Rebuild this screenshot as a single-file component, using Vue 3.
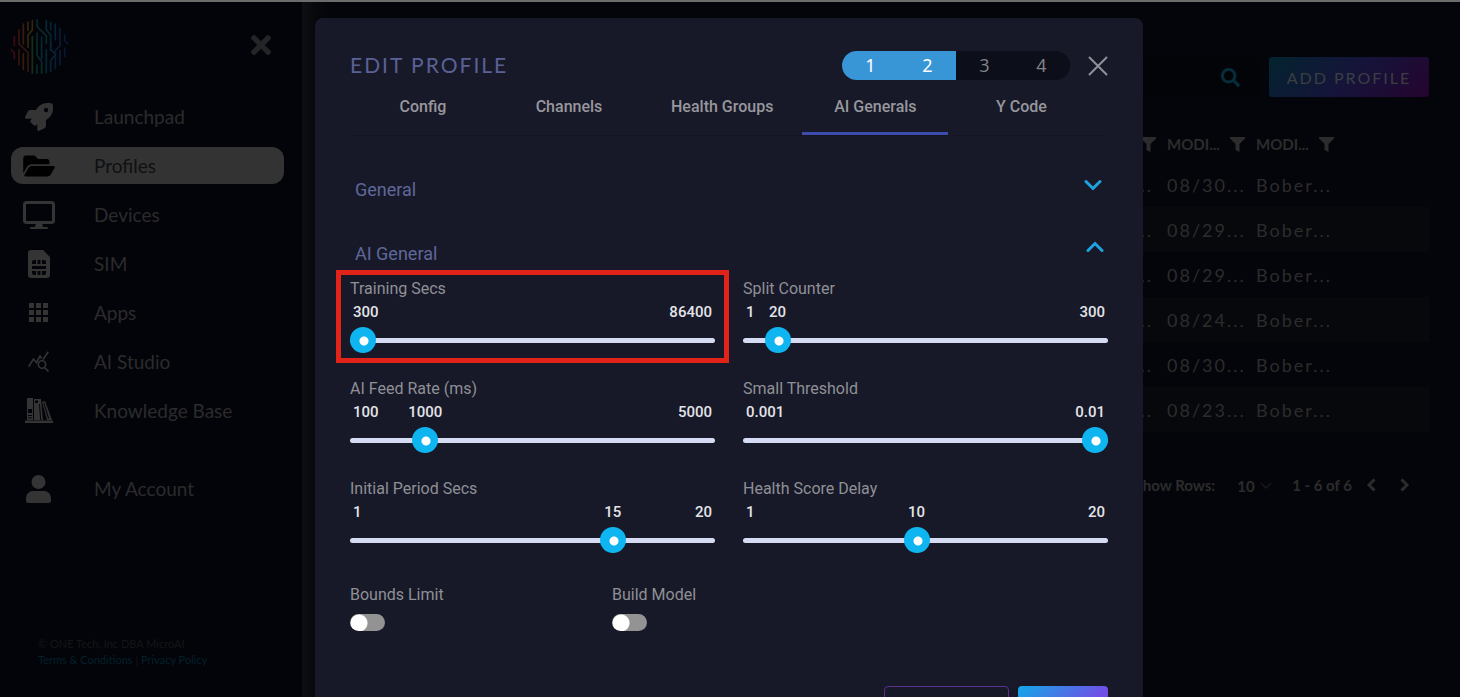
<script setup>
import { reactive } from 'vue'

const nav = [
  { label: 'Launchpad', icon: 'rocket' },
  { label: 'Profiles', icon: 'folder', active: true },
  { label: 'Devices', icon: 'monitor' },
  { label: 'SIM', icon: 'sim' },
  { label: 'Apps', icon: 'apps' },
  { label: 'AI Studio', icon: 'studio' },
  { label: 'Knowledge Base', icon: 'books' },
  { label: 'My Account', icon: 'user', apart: true },
]

const rows = ['08/30...', '08/29...', '08/29...', '08/24...', '08/30...', '08/23...']

const steps = [1, 2, 3, 4]
const currentStep = 2

const tabs = ['Config', 'Channels', 'Health Groups', 'AI Generals', 'Y Code']
const activeTab = 'AI Generals'

const sliders = reactive([
  { id: 'training', label: 'Training Secs', min: 300, max: 86400, step: 1, value: 300, marked: true },
  { id: 'split', label: 'Split Counter', min: 1, max: 300, step: 1, value: 20 },
  { id: 'feed', label: 'AI Feed Rate (ms)', min: 100, max: 5000, step: 100, value: 1000 },
  { id: 'threshold', label: 'Small Threshold', min: 0.001, max: 0.01, step: 0.001, value: 0.01 },
  { id: 'period', label: 'Initial Period Secs', min: 1, max: 20, step: 1, value: 15 },
  { id: 'delay', label: 'Health Score Delay', min: 1, max: 20, step: 1, value: 10 },
])

const toggles = reactive([
  { id: 'bounds', label: 'Bounds Limit', on: false },
  { id: 'build', label: 'Build Model', on: false },
])

const between = (s) => s.value > s.min && s.value < s.max
const place = (s) => {
  const ratio = (s.value - s.min) / (s.max - s.min)
  return { left: `calc(13px + (100% - 26px) * ${ratio})` }
}

const logoLines = [
  ['#4a0f14', 'M43 110V137M34 149L43 160V177'],
  ['#45180f', 'M57 90V132L84 158V215M57 150V195'],
  ['#45240f', 'M70 73V132M70 162V208'],
  ['#40300f', 'M84 67V92M97 62V90L84 106V142'],
  ['#1c3a18', 'M97 110V220'],
  ['#0b3534', 'M111 60V80L139 108V132M111 100V166L125 186V220M111 196V220'],
  ['#07323f', 'M125 112V176M139 62V90L152 106V150M139 150V218'],
  ['#072c45', 'M152 68V90M152 128V150L166 162V165L152 182V215M166 73V120'],
  ['#082442', 'M180 86V138L166 152V206M180 152V195'],
  ['#081c3a', 'M194 106V122L203 132M194 145V170'],
]
</script>

<template>
  <div class="page">
    <aside class="sidebar">
      <div class="brand">
        <svg class="logo" viewBox="30 55 177 170" role="img" aria-label="MicroAI">
          <path v-for="[color, d] in logoLines" :key="color" :d="d" :stroke="color" fill="none" stroke-width="5" stroke-linecap="round" />
        </svg>
        <button class="collapse" type="button" aria-label="Close menu">
          <svg viewBox="0 80 352 352"><path fill="currentColor" d="M242.72 256l100.07-100.07c12.28-12.28 12.28-32.19 0-44.48l-22.24-22.24c-12.28-12.28-32.19-12.28-44.48 0L176 189.28 75.93 89.21c-12.28-12.28-32.19-12.28-44.48 0L9.21 111.45c-12.28 12.28-12.28 32.19 0 44.48L109.28 256 9.21 356.07c-12.28 12.28-12.28 32.19 0 44.48l22.24 22.24c12.28 12.28 32.2 12.28 44.48 0L176 322.72l100.07 100.07c12.28 12.28 32.2 12.28 44.48 0l22.24-22.24c12.28-12.28 12.28-32.19 0-44.48L242.72 256z" /></svg>
        </button>
      </div>

      <nav class="nav">
        <a v-for="item in nav" :key="item.label" href="#" class="nav-item" :class="{ active: item.active, apart: item.apart }">
          <span class="nav-icon">
            <svg v-if="item.icon === 'rocket'" width="28" height="28" viewBox="0 0 512 512"><path fill="currentColor" d="M505.12 19.09c-1.19-5.53-6.66-11-12.21-12.18C460.72 0 435.51 0 410.41 0 307.18 0 245.27 55.2 199.05 128H94.84c-16.35.02-35.56 11.88-42.89 26.48L2.52 253.3A28.4 28.4 0 0 0 0 264a24 24 0 0 0 24 24h103.82l-22.48 22.47c-11.36 11.36-12.99 32.26 0 45.25l50.91 50.9c11.15 11.19 32.15 13.16 45.27 0L224 384.16V488a24 24 0 0 0 24 24 28.56 28.56 0 0 0 10.71-2.52l98.73-49.39c14.63-7.3 26.51-26.5 26.51-42.86V312.8c72.6-46.31 128.03-108.41 128.03-211.1.1-25.2.1-50.4-6.86-82.61zM384.04 168A40 40 0 1 1 424.05 128a40.02 40.02 0 0 1-40.01 40z" /></svg>
            <svg v-else-if="item.icon === 'folder'" width="32" height="28" viewBox="0 0 576 512"><path fill="currentColor" d="M572.694 292.093L500.27 416.248A63.997 63.997 0 0 1 444.989 448H45.025c-18.523 0-30.064-20.093-20.731-36.093l72.424-124.155A64 64 0 0 1 152 256h399.964c18.523 0 30.064 20.093 20.73 36.093zM152 224h328v-48c0-26.51-21.49-48-48-48H272l-64-64H48C21.49 64 0 85.49 0 112v278.046l69.077-118.418C86.214 242.25 117.989 224 152 224z" /></svg>
            <svg v-else-if="item.icon === 'monitor'" width="32" height="28" viewBox="0 0 32 28"><rect x="1.5" y="1.5" width="29" height="20" rx="2" fill="none" stroke="currentColor" stroke-width="3" /><path fill="currentColor" d="M13 22h6l1 4h4a1 1 0 0 1 0 2H8a1 1 0 0 1 0-2h4z" /></svg>
            <svg v-else-if="item.icon === 'sim'" width="22" height="28" viewBox="0 0 22 28"><path fill="currentColor" fill-rule="evenodd" d="M3 0h12l7 7v18a3 3 0 0 1-3 3H3a3 3 0 0 1-3-3V3a3 3 0 0 1 3-3zM6 10a2 2 0 0 0-2 2v2h4v-4zM9.500 10v4h3v-4zM14 10v4h4v-2a2 2 0 0 0-2-2zM4 16v3h14v-3zM4 21v2a2 2 0 0 0 2 2h2v-4zM9.500 21v4h3v-4zM14 21v4h2a2 2 0 0 0 2-2v-2z" /></svg>
            <svg v-else-if="item.icon === 'apps'" width="19" height="19" viewBox="0 0 19 19"><path fill="currentColor" d="M0 0h5v5H0zM7 0h5v5H7zM14 0h5v5h-5zM0 7h5v5H0zM7 7h5v5H7zM14 7h5v5h-5zM0 14h5v5H0zM7 14h5v5H7zM14 14h5v5h-5z" /></svg>
            <svg v-else-if="item.icon === 'studio'" width="21" height="21" viewBox="0 0 21 21" fill="none" stroke="currentColor" stroke-width="1.6"><path d="M.7 15.500L5.500 8l3 3.500L12 5l1.500 2.500M15 8.500L20.300.7M16.500 16.500l4 4" /><circle cx="14" cy="13.500" r="3.700" /></svg>
            <svg v-else-if="item.icon === 'books'" width="28" height="25" viewBox="0 0 28 25"><path fill="currentColor" fill-rule="evenodd" d="M2 0h6v22H2zM3 11v4h4v-4zM3 17v1h4v-1zM3 19.500v1h4v-1zM9 1h7l2 21H9zM10 2.500v2.500h3V2.500zM14 6l1.200 16h1L15 6zM17 4l3-1 7 19h-5zM18.300 5L23 20.500h1.200L19.200 4.500zM0 22.500h28V25H0z" /></svg>
            <svg v-else width="25" height="28" viewBox="0 0 25 28"><circle cx="12.500" cy="7" r="7" fill="currentColor" /><path fill="currentColor" d="M7 16h11a7 7 0 0 1 7 7v2.500a2.500 2.500 0 0 1-2.500 2.500h-20A2.500 2.500 0 0 1 0 25.500V23a7 7 0 0 1 7-7z" /></svg>
          </span>
          <span>{{ item.label }}</span>
        </a>
      </nav>

      <footer class="legal">
        <div>© ONE Tech, Inc DBA MicroAI</div>
        <div><a href="#">Terms &amp; Conditions</a> | <a href="#">Privacy Policy</a></div>
      </footer>
    </aside>

    <main class="content">
      <div class="toolbar">
        <div class="search">
          <input type="search" aria-label="Search profiles" />
          <svg width="19" height="19" viewBox="0 0 512 512"><path fill="currentColor" d="M505 442.7L405.3 343c-4.500-4.500-10.600-7-17-7H372c27.600-35.300 44-79.700 44-128C416 93.100 322.900 0 208 0S0 93.100 0 208s93.100 208 208 208c48.300 0 92.700-16.400 128-44v16.300c0 6.400 2.500 12.500 7 17l99.700 99.700c9.400 9.400 24.600 9.400 33.900 0l28.300-28.300c9.400-9.400 9.400-24.600.1-34zM208 336c-70.700 0-128-57.200-128-128 0-70.700 57.200-128 128-128 70.700 0 128 57.200 128 128 0 70.700-57.200 128-128 128z" /></svg>
        </div>
        <button class="add" type="button">ADD PROFILE</button>
      </div>

      <table class="profiles">
        <colgroup><col /><col class="col-date" /><col class="col-user" /></colgroup>
        <thead>
          <tr>
            <th v-for="(name, i) in ['', 'MODI...', 'MODI...']" :key="i" scope="col">
              <span class="th">
                <span class="th-name">{{ name }}</span>
                <svg width="15" height="15" viewBox="0 0 15 15"><path fill="currentColor" d="M0 0h15v1.500L9.500 7v8l-4-2V7L0 1.500z" /></svg>
              </span>
            </th>
          </tr>
        </thead>
        <tbody>
          <tr v-for="(date, i) in rows" :key="i">
            <td class="cut">...</td>
            <td>{{ date }}</td>
            <td>Bober...</td>
          </tr>
        </tbody>
      </table>

      <div class="pager">
        <label for="page-size">Show Rows:</label>
        <span class="size">
          <select id="page-size"><option>10</option></select>
          <svg width="12" height="8" viewBox="0 0 12 8" fill="none" stroke="currentColor" stroke-width="1.500"><path d="M1 1l5 5 5-5" /></svg>
        </span>
        <span class="range">1 - 6 of 6</span>
        <button type="button" aria-label="Previous page"><svg width="10" height="14" viewBox="0 0 10 14" fill="none" stroke="currentColor" stroke-width="3"><path d="M8.500 1.500L3 7l5.500 5.500" /></svg></button>
        <button type="button" aria-label="Next page"><svg width="10" height="14" viewBox="0 0 10 14" fill="none" stroke="currentColor" stroke-width="3"><path d="M1.500 1.500L7 7l-5.500 5.500" /></svg></button>
      </div>
    </main>

    <div class="overlay">
      <section class="modal" role="dialog" aria-labelledby="modal-title">
        <header class="modal-head">
          <h1 id="modal-title">EDIT PROFILE</h1>
          <ol class="steps">
            <li v-for="n in steps" :key="n" :class="{ done: n <= currentStep }">{{ n }}</li>
          </ol>
          <button class="close" type="button" aria-label="Close">
            <svg width="20" height="20" viewBox="0 0 20 20" fill="none" stroke="currentColor" stroke-width="2"><path d="M1 1l18 18M19 1L1 19" /></svg>
          </button>
        </header>

        <div class="tabs" role="tablist">
          <button v-for="tab in tabs" :key="tab" type="button" role="tab" :aria-selected="tab === activeTab" class="tab" :class="{ selected: tab === activeTab }">{{ tab }}</button>
        </div>

        <div class="panels">
          <button v-for="panel in ['General', 'AI General']" :key="panel" class="panel-head" type="button" :aria-expanded="panel === 'AI General'">
            <span>{{ panel }}</span>
            <svg width="20" height="14" viewBox="0 0 20 14" fill="none" stroke="currentColor" stroke-width="3" stroke-linecap="round"><path d="M2 4.500l7 7 7-7" /></svg>
          </button>
        </div>

        <div class="sliders">
          <div v-for="s in sliders" :key="s.id" class="field" :class="{ marked: s.marked }">
            <label :for="s.id">{{ s.label }}</label>
            <div class="values">
              <span>{{ s.min }}</span>
              <output v-if="between(s)" :for="s.id" :style="place(s)">{{ s.value }}</output>
              <span>{{ s.max }}</span>
            </div>
            <input :id="s.id" v-model.number="s.value" type="range" :min="s.min" :max="s.max" :step="s.step" />
          </div>
        </div>

        <div class="toggles">
          <div v-for="t in toggles" :key="t.id" class="toggle">
            <label :for="t.id">{{ t.label }}</label>
            <input :id="t.id" v-model="t.on" type="checkbox" role="switch" />
          </div>
        </div>

        <footer class="actions">
          <button class="secondary" type="button" aria-label="Cancel"></button>
          <button class="primary" type="button" aria-label="Save"></button>
        </footer>
      </section>
    </div>
  </div>
</template>

<style>
body {
  margin: 0;
  background: #04050a;
}
</style>

<style scoped>
* {
  box-sizing: border-box;
}

button {
  margin: 0;
  padding: 0;
  border: 0;
  background: none;
  color: inherit;
  font: inherit;
}

svg {
  display: block;
}

.page {
  position: relative;
  display: grid;
  grid-template-columns: 302px 1fr;
  height: 100vh;
  overflow: hidden;
  border-top: 2px solid #6a6d6b;
  background: #04050a;
  font-family: Lato, "Liberation Sans", sans-serif;
}

/* Sidebar */
.sidebar {
  display: flex;
  flex-direction: column;
  background: #030409;
  color: #323232;
}

.brand {
  display: flex;
  justify-content: space-between;
  align-items: flex-start;
  padding: 16px 31px 0 10px;
}

.logo {
  width: 59px;
  height: 57px;
  opacity: 0.8;
}

.collapse {
  margin-top: 17px;
  color: #242527;
}

.collapse svg {
  width: 20px;
  height: 20px;
}

.nav {
  display: flex;
  flex-direction: column;
  gap: 12px;
  padding: 23px 18px 0 11px;
}

.nav-item {
  display: flex;
  align-items: center;
  height: 37px;
  border-radius: 12px;
  color: #2b2b2c;
  font-size: 19px;
  text-decoration: none;
}

.nav-item.active {
  background: #333;
  color: #101011;
}

.nav-item.apart {
  margin-top: 29px;
}

.nav-icon {
  display: flex;
  justify-content: center;
  width: 55px;
  margin-right: 28px;
  color: #343434;
}

.active .nav-icon {
  color: #000;
}

.legal {
  margin-top: auto;
  padding: 0 0 29px 38px;
  color: #141518;
  font-size: 11px;
  line-height: 16px;
}

.legal a {
  color: #04202c;
  text-decoration: none;
}

/* Page behind the dialog */
.content {
  padding: 55px 31px 0 28px;
  background: linear-gradient(90deg, #0e0f12, #07080c 13px, #04050a 28px);
  color: #2c2c2c;
}

.toolbar {
  display: flex;
  gap: 11px;
}

.search {
  display: flex;
  flex: 1;
  align-items: center;
  padding-right: 18px;
  background: #030408;
  color: #062d3b;
}

.search input {
  flex: 1;
  min-width: 0;
  height: 40px;
  border: 0;
  outline: 0;
  background: none;
  color: inherit;
  appearance: none;
}

.add {
  width: 160px;
  height: 40px;
  border-radius: 3px;
  background: linear-gradient(135deg, #03232e, #15143a 50%, #25042f);
  color: #3b3f42;
  font-size: 16px;
  letter-spacing: 2px;
}

.profiles {
  width: 100%;
  margin-top: 29px;
  border-collapse: collapse;
  table-layout: fixed;
}

.col-date {
  width: 89px;
}

.col-user {
  width: 173px;
}

.profiles th,
.profiles td {
  height: 45px;
  padding: 0;
  text-align: left;
}

.profiles th {
  height: 36px;
  font-size: 15px;
}

.th {
  display: flex;
  align-items: center;
  gap: 8px;
}

.th-name {
  width: 55px;
}

.profiles th:first-child .th {
  justify-content: flex-end;
  padding-right: 11px;
}

.profiles td {
  font-size: 18px;
  letter-spacing: 2px;
}

.profiles td.cut {
  padding-right: 14px;
  text-align: right;
}

.profiles tbody tr:nth-child(even) {
  background: #07080c;
}

.pager {
  display: flex;
  align-items: center;
  justify-content: flex-end;
  margin-top: 43px;
  padding-right: 19px;
  font-size: 15px;
  font-weight: 700;
}

.size {
  display: flex;
  align-items: center;
  gap: 5px;
  margin: 2px 20px 0 22px;
}

.size select {
  width: 18px;
  padding: 0;
  border: 0;
  appearance: none;
  background: none;
  color: inherit;
  font: inherit;
}

.size svg {
  color: #17181b;
}

.range {
  margin-right: 14px;
}

.pager button + button {
  margin-left: 24px;
}

/* Dialog */
.overlay {
  position: absolute;
  inset: 0;
  display: flex;
  justify-content: center;
  align-items: flex-start;
  padding: 16px 2px 0 0;
}

.modal {
  width: min(828px, 100%);
  padding: 33px 35px 24px;
  border-radius: 8px;
  background: #171929;
  color: #8f9095;
  font-family: Roboto, "Liberation Sans", sans-serif;
  font-size: 16px;
}

.modal-head {
  display: flex;
  align-items: center;
  height: 29px;
}

h1 {
  flex: 1;
  margin: 0;
  padding-bottom: 2px;
  color: #5a6196;
  font-family: Lato, "Liberation Sans", sans-serif;
  font-size: 21px;
  font-weight: 400;
  letter-spacing: 2px;
}

.steps {
  display: flex;
  height: 29px;
  margin: 0 18px 0 0;
  padding: 0;
  overflow: hidden;
  border-radius: 15px;
  background: #0c0e19;
  list-style: none;
}

.steps li {
  width: 57px;
  color: #808085;
  font-family: "Noto Sans", sans-serif;
  font-size: 18px;
  line-height: 28px;
  text-align: center;
}

.steps .done {
  background: #3896d6;
  color: #fff;
}

.close {
  color: #919298;
}

.tabs {
  display: flex;
  border-bottom: 1px solid #151420;
}

.tab {
  min-width: 146px;
  height: 55px;
  padding: 0 29px;
  border-bottom: 3px solid transparent;
  color: #97979c;
  font-weight: 500;
}

.tab.selected {
  border-bottom-color: #3c4bae;
}

.panels {
  display: flex;
  flex-direction: column;
  gap: 14px;
  margin-top: 28px;
}

.panel-head {
  display: flex;
  align-items: center;
  justify-content: space-between;
  height: 50px;
  padding: 0 4px 0 5px;
  color: #5f6899;
  font-size: 18px;
}

.panel-head svg {
  margin-bottom: 10px;
  color: #1fa3e0;
}

.panel-head[aria-expanded="true"] svg {
  transform: rotate(180deg);
}

.sliders {
  display: grid;
  grid-template-columns: 1fr 1fr;
  gap: 25px 28px;
}

.field {
  position: relative;
  display: flex;
  flex-direction: column;
}

.field.marked::after {
  position: absolute;
  inset: -8px -14px -10px;
  border: 5px solid #e2231a;
  content: "";
  pointer-events: none;
}

.modal label {
  line-height: 22px;
}

.values {
  position: relative;
  display: flex;
  justify-content: space-between;
  margin: 1px 0 4px;
  padding: 0 3px;
  color: #e4e4e8;
  font-size: 15px;
  font-weight: 500;
  line-height: 22px;
}

.values output {
  position: absolute;
  top: 0;
  transform: translateX(-50%);
}

input[type="range"] {
  width: 100%;
  height: 26px;
  margin: 0;
  appearance: none;
  background: none;
}

input[type="range"]::-webkit-slider-runnable-track {
  height: 5px;
  border-radius: 3px;
  background: #d5dbf2;
}

input[type="range"]::-webkit-slider-thumb {
  width: 26px;
  height: 26px;
  margin-top: -11px;
  border-radius: 50%;
  appearance: none;
  background: radial-gradient(circle at 14px 14px, #fff 4px, #0fb5f0 5px);
}

.toggles {
  display: grid;
  grid-template-columns: repeat(3, 1fr);
  gap: 28px;
  margin-top: 31px;
}

.toggle {
  display: flex;
  flex-direction: column;
  align-items: flex-start;
  gap: 8px;
}

.toggle input {
  width: 35px;
  height: 17px;
  margin: 0;
  border-radius: 9px;
  appearance: none;
  background: radial-gradient(circle at 9px 9px, #fff 8px, transparent 9px) #939393;
}

.toggle input:checked {
  background: radial-gradient(circle at 26px 9px, #fff 8px, transparent 9px) #0fb5f0;
}

.actions {
  display: flex;
  justify-content: flex-end;
  gap: 9px;
  margin-top: 55px;
}

.actions button {
  height: 40px;
  border-radius: 4px;
}

.secondary {
  width: 125px;
  border: 1px solid #5b2f8c;
}

.primary {
  width: 90px;
  background: linear-gradient(135deg, #12a8e8, #6f50e6 70%, #8a38e2);
}
</style>
